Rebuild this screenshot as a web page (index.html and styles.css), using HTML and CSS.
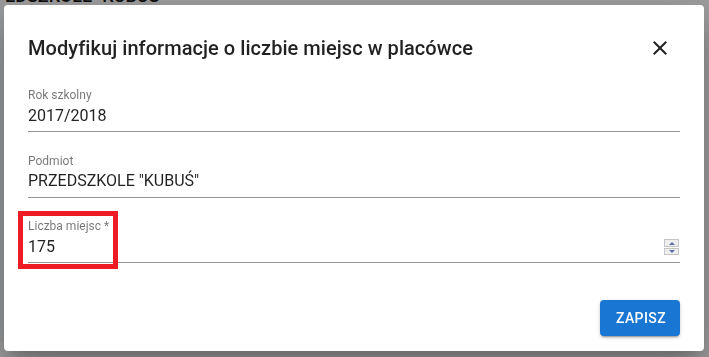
FILE: index.html
```html
<!DOCTYPE html>
<html lang="pl">
<head>
<meta charset="utf-8">
<title>Modyfikuj informacje o liczbie miejsc w placówce</title>
<link rel="stylesheet" href="styles.css">
</head>
<body>
<div class="page">
  <div class="page-strip"></div>
  <div class="page-heading">EDSZKOLE "KUBUŚ"</div>
</div>
<div class="backdrop">
  <div class="dialog" role="dialog">
    <div class="dialog-title-row">
      <h2 class="dialog-title">Modyfikuj informacje o liczbie miejsc w placówce</h2>
      <button class="close-btn" aria-label="Zamknij">
        <svg viewBox="0 0 24 24" width="24" height="24"><path d="M19 6.41L17.59 5 12 10.59 6.41 5 5 6.41 10.59 12 5 17.59 6.41 19 12 13.41 17.59 19 19 17.59 13.41 12z"/></svg>
      </button>
    </div>
    <div class="fields">
      <div class="field">
        <div class="field-label">Rok szkolny</div>
        <div class="field-value"><span>2017/2018</span></div>
      </div>
      <div class="field">
        <div class="field-label">Podmiot</div>
        <div class="field-value"><span>PRZEDSZKOLE "KUBUŚ"</span></div>
      </div>
      <div class="field field-marked">
        <div class="field-label">Liczba miejsc *</div>
        <div class="field-value">
          <span>175</span>
          <div class="spinner">
            <div class="spin spin-up"></div>
            <div class="spin spin-down"></div>
          </div>
        </div>
        <div class="highlight"></div>
      </div>
    </div>
    <div class="dialog-actions">
      <button class="btn-primary">ZAPISZ</button>
    </div>
  </div>
</div>
</body>
</html>
```

FILE: styles.css
```css
* { box-sizing: border-box; }
html, body { margin: 0; padding: 0; }
body {
  width: 709px;
  height: 357px;
  overflow: hidden;
  background: #ffffff;
  font-family: Roboto, "Liberation Sans", Arial, sans-serif;
}
.page {
  position: relative;
  height: 357px;
}
.page-strip {
  position: absolute;
  left: 0;
  top: 0;
  width: 4px;
  height: 357px;
  background: #f6f8fc;
}
.page-heading {
  margin-top: -15px;
  margin-left: 5px;
  font-size: 18px;
  line-height: 21px;
  font-weight: 500;
  color: #151515;
  white-space: nowrap;
}
.backdrop {
  position: fixed;
  inset: 0;
  background: rgba(0, 0, 0, 0.38);
  display: flex;
  align-items: flex-start;
}
.dialog {
  margin: 5px 0 0 4px;
  width: 700px;
  height: 346px;
  background: #ffffff;
  border-radius: 4px;
  box-shadow: 0 11px 15px -7px rgba(0,0,0,0.2), 0 24px 38px 3px rgba(0,0,0,0.14), 0 9px 46px 8px rgba(0,0,0,0.12);
  padding: 27.4px 24px 15px 24px;
  display: flex;
  flex-direction: column;
}
.dialog-title-row {
  display: flex;
  align-items: center;
  justify-content: space-between;
  height: 32px;
}
.dialog-title {
  margin: 0;
  font-size: 20px;
  line-height: 32px;
  font-weight: 500;
  color: rgba(0, 0, 0, 0.87);
  letter-spacing: 0.05px;
}
.close-btn {
  border: 0;
  background: transparent;
  padding: 0;
  margin-right: 8px;
  width: 24px;
  height: 24px;
  display: flex;
  cursor: pointer;
}
.close-btn svg { fill: rgba(0, 0, 0, 0.87); }
.fields {
  margin-top: 24px;
  display: flex;
  flex-direction: column;
  gap: 21.5px;
}
.field {
  position: relative;
}
.field-label {
  font-size: 12px;
  line-height: 14px;
  color: rgba(0, 0, 0, 0.54);
}
.field-value {
  margin-top: 4px;
  height: 26px;
  padding-bottom: 7px;
  border-bottom: 1px solid rgba(0, 0, 0, 0.42);
  font-size: 16px;
  line-height: 19px;
  color: rgba(0, 0, 0, 0.87);
  display: flex;
  align-items: center;
  justify-content: space-between;
}
.spinner {
  width: 15px;
  height: 16px;
  margin-right: 1px;
  margin-top: 2px;
  display: flex;
  flex-direction: column;
  gap: 1px;
}
.spin {
  flex: 1;
  background: #efefef;
  border: 1px solid #c4c4c4;
  display: flex;
  align-items: center;
  justify-content: center;
}
.spin::after {
  content: "";
  width: 0;
  height: 0;
  border-left: 3.5px solid transparent;
  border-right: 3.5px solid transparent;
}
.spin-up::after { border-bottom: 3px solid #5a6ea8; }
.spin-down::after { border-top: 3px solid #5a6ea8; }
.highlight {
  position: absolute;
  left: -10px;
  top: -8.5px;
  width: 100px;
  height: 58px;
  border: 5px solid #ed1c24;
  pointer-events: none;
}
.dialog-actions {
  margin-top: auto;
  display: flex;
  justify-content: flex-end;
}
.btn-primary {
  width: 80px;
  height: 36px;
  border: 0;
  border-radius: 4px;
  background: #1976d2;
  color: #ffffff;
  font-family: Roboto, "Liberation Sans", Arial, sans-serif;
  font-size: 14px;
  font-weight: 500;
  letter-spacing: 0.4px;
  padding: 0 16px;
  box-shadow: 0 3px 1px -2px rgba(0,0,0,0.2), 0 2px 2px 0 rgba(0,0,0,0.14), 0 1px 5px 0 rgba(0,0,0,0.12);
  cursor: pointer;
}
```
